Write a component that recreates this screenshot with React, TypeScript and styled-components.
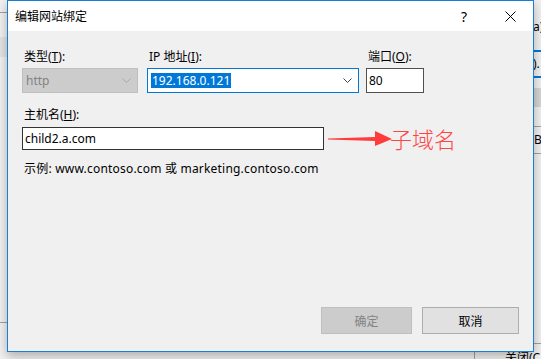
import React from 'react';
import styled, { createGlobalStyle } from 'styled-components';

const FONT = `"Segoe UI", "Noto Sans", "Noto Sans CJK SC", sans-serif`;

const Global = createGlobalStyle`
  html, body { margin: 0; padding: 0; width: 541px; height: 359px; overflow: hidden; background: #f0f0f0; }
  * { box-sizing: border-box; }
`;

const Desktop = styled.div`
  position: relative;
  width: 541px;
  height: 359px;
  overflow: hidden;
  background: #f0f0f0;
  font-family: ${FONT};
  font-size: 12px;
  color: #000;
`;

/* fragments of the window lying behind the dialog */
const BackLine = styled.div<{ $top: number; $left: number; $width: number; $color?: string; $h?: number }>`
  position: absolute;
  top: ${(p) => p.$top}px;
  left: ${(p) => p.$left}px;
  width: ${(p) => p.$width}px;
  height: ${(p) => p.$h ?? 1}px;
  background: ${(p) => p.$color ?? '#a0a0a0'};
`;

const BackText = styled.div<{ $top: number; $left: number; $color?: string }>`
  position: absolute;
  top: ${(p) => p.$top}px;
  left: ${(p) => p.$left}px;
  font-size: 12px;
  line-height: 16px;
  white-space: nowrap;
  color: ${(p) => p.$color ?? '#000'};
`;

const Dialog = styled.div`
  position: absolute;
  left: 7px;
  top: 0;
  width: 527px;
  height: 352px;
  border: 1px solid #1a7fd4;
  background: #f0f0f0;
  display: flex;
  flex-direction: column;
  box-shadow: 0 4px 10px rgba(0, 0, 0, 0.28);
`;

const TitleBar = styled.div`
  height: 30px;
  flex: none;
  background: #fff;
  display: flex;
  align-items: center;
  padding-left: 7px;
`;

const Title = styled.div`
  flex: 1;
  font-size: 12px;
  line-height: 16px;
  padding-top: 2px;
`;

const CaptionButton = styled.div`
  width: 46px;
  height: 30px;
  display: flex;
  align-items: center;
  justify-content: center;
  font-size: 14px;
  color: #000;
`;

const Body = styled.div`
  flex: 1;
  display: flex;
  flex-direction: column;
  padding: 18px 14px 17px 14px;
`;

const FieldRow = styled.div`
  display: grid;
  grid-template-columns: 125px 219px 58px;
  align-items: start;
`;

const Field = styled.div`
  display: flex;
  flex-direction: column;
`;

const Label = styled.div`
  line-height: 16px;
  height: 16px;
  margin-left: 2px;
  margin-bottom: 3px;
  white-space: nowrap;
  u { text-decoration: underline; text-underline-offset: 1px; }
`;

const SelectBox = styled.div<{ $width: number; $disabled?: boolean; $focused?: boolean }>`
  width: ${(p) => p.$width}px;
  height: 25px;
  display: flex;
  align-items: center;
  padding: 0 6px 0 3px;
  background: ${(p) => (p.$disabled ? '#cccccc' : '#fff')};
  border: 1px solid ${(p) => (p.$disabled ? '#bfbfbf' : p.$focused ? '#0078d7' : '#7a7a7a')};
  color: ${(p) => (p.$disabled ? '#838383' : '#000')};
  font-size: 12px;
`;

const SelectValue = styled.span`
  flex: 1;
  white-space: nowrap;
`;

const Highlight = styled.span`
  background: #0078d7;
  color: #fff;
  padding: 0 1px;
  line-height: 15px;
  display: inline-block;
`;

const TextBox = styled.div<{ $width: number; $height: number; $border: string }>`
  width: ${(p) => p.$width}px;
  height: ${(p) => p.$height}px;
  background: #fff;
  border: 1px solid ${(p) => p.$border};
  display: flex;
  align-items: center;
  padding-left: 2px;
  font-size: 12px;
  white-space: nowrap;
`;

const HostLabel = styled(Label)`
  margin-top: 14px;
  margin-bottom: 4px;
`;

const HostRow = styled.div`
  display: flex;
  align-items: center;
`;

const Annotation = styled.div`
  display: flex;
  align-items: center;
  margin-left: 4px;
  color: #ff3b3b;
`;

const AnnotationText = styled.span`
  font-family: "Noto Sans CJK SC", sans-serif;
  font-weight: 300;
  font-size: 22px;
  line-height: 24px;
  margin-left: -2px;
  margin-top: -2px;
  color: #ff4444;
`;

const Example = styled.div`
  margin-top: 11px;
  margin-left: 2px;
  line-height: 16px;
  letter-spacing: 0.2px;
  white-space: nowrap;
`;

const Footer = styled.div`
  margin-top: auto;
  display: flex;
  justify-content: flex-end;
  gap: 10px;
`;

const Button = styled.div<{ $width: number; $disabled?: boolean }>`
  width: ${(p) => p.$width}px;
  height: 27px;
  display: flex;
  align-items: center;
  justify-content: center;
  background: ${(p) => (p.$disabled ? '#cccccc' : '#e1e1e1')};
  border: 1px solid ${(p) => (p.$disabled ? '#bfbfbf' : '#adadad')};
  color: ${(p) => (p.$disabled ? '#838383' : '#000')};
  font-size: 12px;
`;

const Chevron = ({ color }: { color: string }) => (
  <svg width="9" height="5" viewBox="0 0 9 5">
    <polyline points="0.5,0.5 4.5,4.5 8.5,0.5" fill="none" stroke={color} strokeWidth="1" />
  </svg>
);

const CloseIcon = () => (
  <svg width="11" height="11" viewBox="0 0 11 11">
    <line x1="0.5" y1="0.5" x2="10.5" y2="10.5" stroke="#000" strokeWidth="1" />
    <line x1="10.5" y1="0.5" x2="0.5" y2="10.5" stroke="#000" strokeWidth="1" />
  </svg>
);

const Arrow = () => (
  <svg width="64" height="18" viewBox="0 0 64 18">
    <polygon points="0,8.6 47,7 47,1 64,9 47,16 47,11 0,9.6" fill="#ff3b3b" />
  </svg>
);

export default function App() {
  return (
    <Desktop>
      <Global />
      <BackLine $top={12} $left={0} $width={7} />
      <BackLine $top={37} $left={0} $width={7} $h={20} $color="#e3e3e3" />
      <BackLine $top={322} $left={0} $width={7} />
      <BackLine $top={50} $left={534} $width={7} $h={2} $color="#0078d7" />
      <BackLine $top={76} $left={534} $width={7} $h={2} $color="#0078d7" />
      <BackLine $top={88} $left={534} $width={7} $h={19} $color="#d4d4d4" />
      <BackLine $top={126} $left={534} $width={7} />
      <BackLine $top={153} $left={534} $width={7} />
      <BackLine $top={343} $left={534} $width={7} />
      <BackLine $top={352} $left={474} $width={1} $h={7} />
      <BackText $top={19} $left={533}>a)</BackText>
      <BackText $top={56} $left={533}>).</BackText>
      <BackText $top={132} $left={534}>B]</BackText>
      <BackText $top={350} $left={505}>关闭(C</BackText>

      <Dialog>
        <TitleBar>
          <Title>编辑网站绑定</Title>
          <CaptionButton>?</CaptionButton>
          <CaptionButton>
            <CloseIcon />
          </CaptionButton>
        </TitleBar>
        <Body>
          <FieldRow>
            <Field>
              <Label>
                类型(<u>T</u>):
              </Label>
              <SelectBox $width={116} $disabled>
                <SelectValue>http</SelectValue>
                <Chevron color="#a8a8a8" />
              </SelectBox>
            </Field>
            <Field>
              <Label>
                IP 地址(<u>I</u>):
              </Label>
              <SelectBox $width={212} $focused>
                <SelectValue>
                  <Highlight>192.168.0.121</Highlight>
                </SelectValue>
                <Chevron color="#444" />
              </SelectBox>
            </Field>
            <Field>
              <Label>
                端口(<u>O</u>):
              </Label>
              <TextBox $width={58} $height={25} $border="#505050">
                80
              </TextBox>
            </Field>
          </FieldRow>

          <HostLabel>
            主机名(<u>H</u>):
          </HostLabel>
          <HostRow>
            <TextBox $width={302} $height={23} $border="#333">
              child2.a.com
            </TextBox>
            <Annotation>
              <Arrow />
              <AnnotationText>子域名</AnnotationText>
            </Annotation>
          </HostRow>
          <Example>示例: www.contoso.com 或 marketing.contoso.com</Example>

          <Footer>
            <Button $width={91} $disabled>
              确定
            </Button>
            <Button $width={97}>取消</Button>
          </Footer>
        </Body>
      </Dialog>
    </Desktop>
  );
}
